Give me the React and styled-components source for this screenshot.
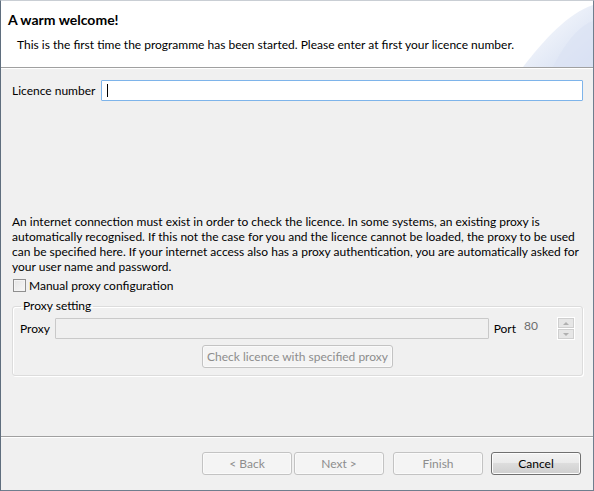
import React from "react"
import styled, { createGlobalStyle } from "styled-components"

const Global = createGlobalStyle`
  html, body {
    margin: 0;
    padding: 0;
    background: #f0f0f0;
  }
  body {
    font-family: Lato, "Liberation Sans", sans-serif;
    font-size: 12px;
    color: #000;
  }
`

const Window = styled.div`
  width: 594px;
  height: 491px;
  box-sizing: border-box;
  border: 1px solid #6f7e8e;
  border-top-color: #c9ced4;
  border-left-color: #5f6e7e;
  display: flex;
  flex-direction: column;
  background: #f0f0f0;
  overflow: hidden;
`

const Header = styled.div`
  position: relative;
  height: 67px;
  background: #fff;
  border-bottom: 1px solid #a0a0a0;
  box-sizing: border-box;
  padding: 10px 0 0 7px;
  overflow: hidden;
`

const Swoosh = styled.svg`
  position: absolute;
  right: 0;
  top: 0;
`

const Title = styled.div`
  position: relative;
  font-weight: bold;
  font-size: 14px;
  line-height: 17px;
`

const Subtitle = styled.div`
  position: relative;
  margin: 9px 0 0 9px;
  line-height: 16px;
`

const Content = styled.div`
  flex: 1;
  border-top: 1px solid #fff;
  padding: 11px 10px 0 11px;
  display: flex;
  flex-direction: column;
`

const Row = styled.div`
  display: flex;
  align-items: center;
  gap: ${p => p.gap || 6}px;
`

const Label = styled.span`
  white-space: nowrap;
  color: ${p => (p.dim ? "#6d6d6d" : "#000")};
`

const TextInput = styled.div`
  flex: 1;
  height: 21px;
  box-sizing: border-box;
  background: ${p => (p.disabled ? "#f0f0f0" : "#fff")};
  border: 1px solid ${p => (p.focused ? "#7eb4ea" : "#c9c9c9")};
  border-radius: 1px;
  display: flex;
  align-items: center;
  padding-left: 5px;
`

const Caret = styled.span`
  width: 1px;
  height: 13px;
  background: #000;
`

const Info = styled.p`
  margin: 113px 0 0;
  line-height: 15px;
`

const CheckRow = styled.label`
  display: flex;
  align-items: center;
  gap: 3px;
  margin-top: 4px;
  margin-left: 1px;
`

const Box = styled.span`
  width: 11px;
  height: 11px;
  border: 1px solid #8f8f8f;
  background: linear-gradient(135deg, #e4e4e4, #f7f7f7);
  box-shadow: inset 0 0 0 1px #f4f4f4;
`

const Group = styled.fieldset`
  margin: 6px 0 0 0;
  padding: 4px 7px 7px 7px;
  border: 1px solid #dcdcdc;
  border-radius: 3px;
  box-shadow: inset 1px 1px 0 #fff, 1px 1px 0 #fff;
`

const Legend = styled.legend`
  padding: 0 2px;
  margin-left: 1px;
  line-height: 14px;
`

const Port = styled.span`
  width: 28px;
  color: #6d6d6d;
  align-self: flex-start;
  margin: 1px 0 0 3px;
`

const Spinner = styled.div`
  display: flex;
  flex-direction: column;
  border: 1px solid #fff;
  background: #fff;
  gap: 1px;
`

const SpinButton = styled.div`
  width: 14px;
  height: 8px;
  background: #e6e6e6;
  border: 1px solid #cfcfcf;
  display: flex;
  align-items: center;
  justify-content: center;
  &::after {
    content: "";
    border-left: 3px solid transparent;
    border-right: 3px solid transparent;
    ${p => (p.down ? "border-top" : "border-bottom")}: 3px solid #b0b0b0;
  }
`

const CheckButtonRow = styled.div`
  display: flex;
  justify-content: center;
  margin-top: 5px;
`

const Button = styled.button`
  font: inherit;
  height: 23px;
  width: ${p => p.w || 90}px;
  padding: 0 4px;
  box-sizing: border-box;
  border-radius: 3px;
  border: 1px solid ${p => (p.primary ? "#707070" : "#c3c3c3")};
  color: ${p => (p.disabled ? "#8d8d8d" : "#000")};
  background: ${p =>
    p.primary
      ? "linear-gradient(#f2f2f2 0%, #ebebeb 45%, #dddddd 50%, #cfcfcf 100%)"
      : "#f4f4f4"};
  box-shadow: inset 0 0 0 1px ${p => (p.primary ? "#fcfcfc" : "#fafafa")};
  white-space: nowrap;
`

const Footer = styled.div`
  height: 54px;
  box-sizing: border-box;
  border-top: 1px solid #a0a0a0;
  box-shadow: inset 0 1px 0 #fff;
  display: flex;
  justify-content: flex-end;
  align-items: flex-start;
  padding: 15px 12px 0 0;
`

const Gap = styled.span`
  width: ${p => p.w}px;
`

const App = () => (
  <>
    <Global />
    <Window>
      <Header>
        <Swoosh width="80" height="66" viewBox="0 0 80 66">
          <defs>
            <linearGradient id="sw" x1="0" y1="0" x2="1" y2="1">
              <stop offset="0" stopColor="#ffffff" />
              <stop offset="1" stopColor="#d3ddf1" />
            </linearGradient>
          </defs>
          <path d="M10 66 C 30 40, 55 12, 80 4 L 80 66 Z" fill="url(#sw)" />
          <path d="M40 66 C 50 45, 65 25, 80 20 L 80 66 Z" fill="#dbe3f4" opacity="0.7" />
        </Swoosh>
        <Title>A warm welcome!</Title>
        <Subtitle>
          This is the first time the programme has been started. Please enter at first your licence
          number.
        </Subtitle>
      </Header>
      <Content>
        <Row>
          <Label>Licence number</Label>
          <TextInput focused>
            <Caret />
          </TextInput>
        </Row>
        <Info>
          An internet connection must exist in order to check the licence. In some systems, an
          existing proxy is automatically recognised. If this not the case for you and the licence
          cannot be loaded, the proxy to be used can be specified here. If your internet access also
          has a proxy authentication, you are automatically asked for your user name and password.
        </Info>
        <CheckRow>
          <Box />
          <Label>Manual proxy configuration</Label>
        </CheckRow>
        <Group>
          <Legend>Proxy setting</Legend>
          <Row gap={5}>
            <Label>Proxy</Label>
            <TextInput disabled />
            <Label>Port</Label>
            <Port>80</Port>
            <Spinner>
              <SpinButton />
              <SpinButton down />
            </Spinner>
          </Row>
          <CheckButtonRow>
            <Button disabled w={191}>
              Check licence with specified proxy
            </Button>
          </CheckButtonRow>
        </Group>
      </Content>
      <Footer>
        <Button disabled>&lt; Back</Button>
        <Gap w={2} />
        <Button disabled>Next &gt;</Button>
        <Gap w={9} />
        <Button disabled>Finish</Button>
        <Gap w={8} />
        <Button primary>Cancel</Button>
      </Footer>
    </Window>
  </>
)

export default App
